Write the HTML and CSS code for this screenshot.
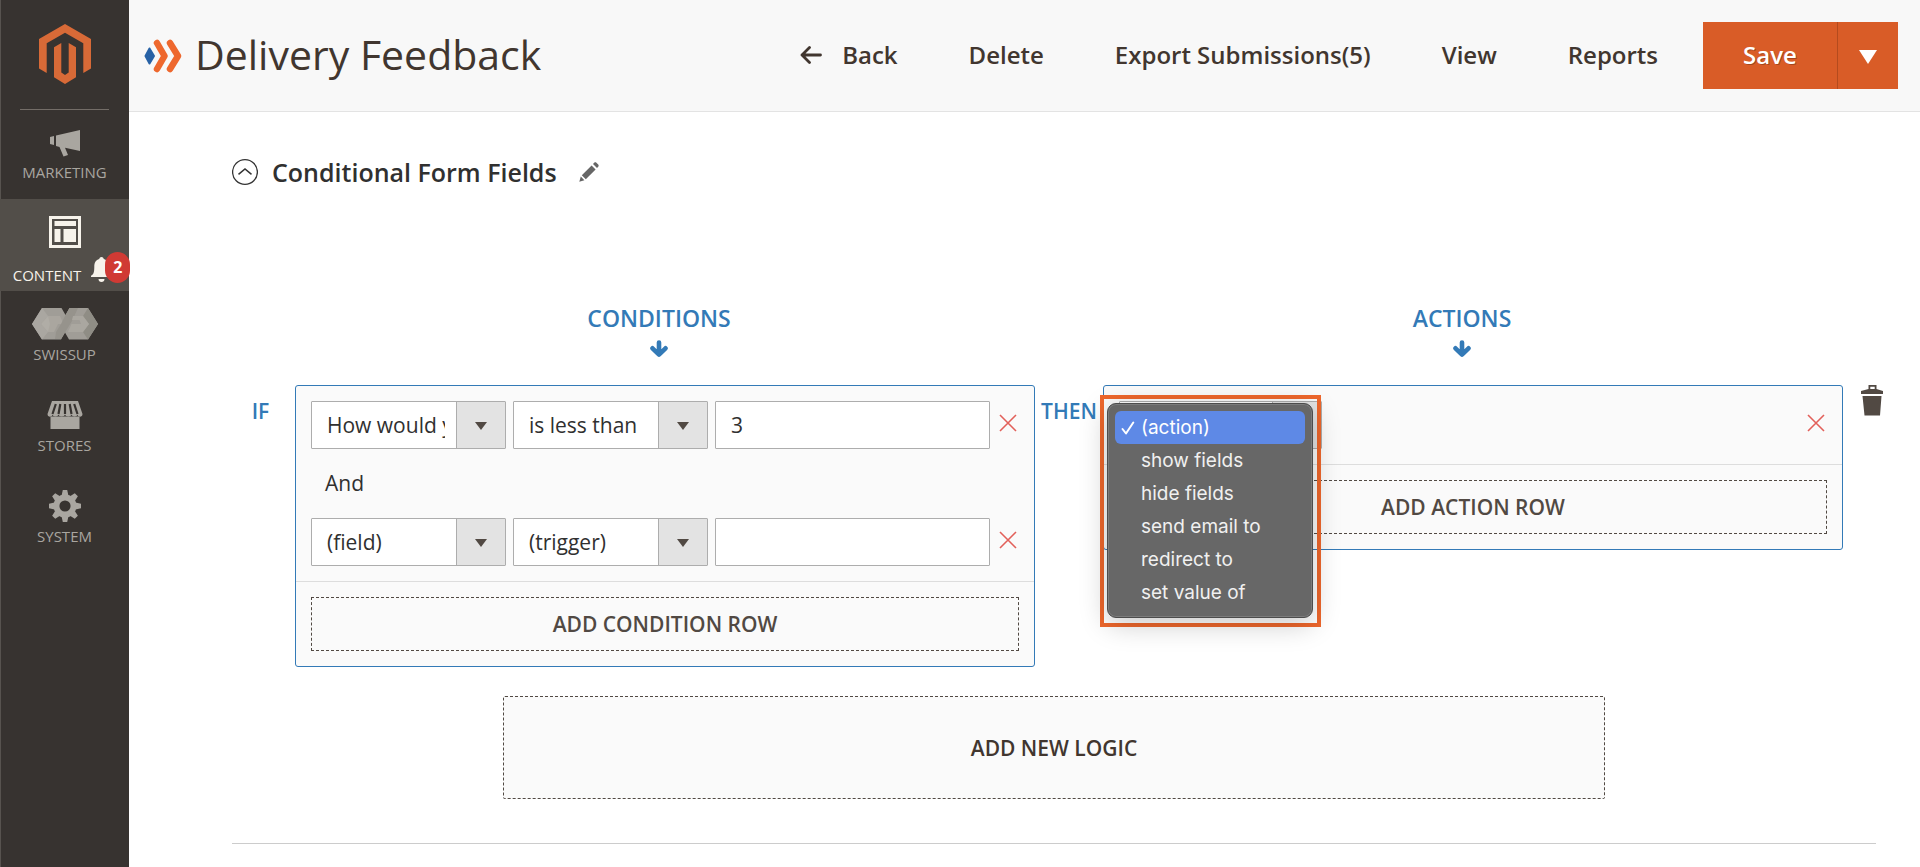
FILE: index.html
```html
<!DOCTYPE html>
<html lang="en">
<head>
<meta charset="utf-8">
<title>Delivery Feedback</title>
<meta name="viewport" content="width=device-width, initial-scale=1">
<link rel="stylesheet" href="styles.css">
</head>
<body>
<svg class="defs" aria-hidden="true">
  <symbol id="arrow-down" viewBox="0 0 18 18"><path d="M9 2.500v12M2.500 8.300L9 14.600l6.500-6.300" fill="none" stroke="currentColor" stroke-width="4.600" stroke-linecap="round" stroke-linejoin="round"/></symbol>
  <symbol id="cross" viewBox="0 0 18 18"><path d="M1 1l16 16M17 1L1 17" fill="none" stroke="currentColor" stroke-width="1.600"/></symbol>
</svg>
<div class="app">
  <aside class="sidebar">
    <a class="brand" href="#" aria-label="Dashboard">
      <svg width="52" height="60" viewBox="0 0 52 60"><path d="M26 0l26 15v29.500L44.300 49V19.300L26 8.700 7.700 19.300V49L0 44.500V15zM15 23.300L22.300 19v29.600L26 51l3.700-2.400V19l7.300 4.300v30L26 60l-11-6.700z" fill="#d86a37"/></svg>
    </a>
    <nav class="menu">
      <a class="menu-item" href="#">
        <svg width="32" height="34" viewBox="0 0 32 34"><path d="M1 12l4-1v9l-4-1zM7 10.500L31 5v21l-15-3.300 3 7.300-4.500 1.400L10.500 22 7 21z" fill="currentColor"/></svg>
        <span>MARKETING</span>
      </a>
      <a class="menu-item active" href="#">
        <svg width="32" height="34" viewBox="0 0 32 34"><path d="M0 1h32v32H0zM3 4v26h26V4z" fill="currentColor" fill-rule="evenodd"/><path d="M5.500 6h21.500v5H5.500zM5.500 14h6v13h-6zM14.500 14H27v13H14.500z" fill="currentColor"/></svg>
        <span class="menu-notice">CONTENT
          <span class="bell"><svg width="21" height="25" viewBox="0 0 21 25"><path d="M10.500 0c1.500 0 2.200 1 2.200 2 4 1.200 5 4 5 8 0 6 1 7.500 3.300 8.800V20H0v-1.200C2.300 17.500 3.300 16 3.300 10c0-4 1-6.800 5-8 0-1 .7-2 2.200-2zM7.500 22h6c0 1.700-1.200 3-3 3s-3-1.300-3-3z" fill="currentColor"/></svg><b class="badge">2</b></span>
        </span>
      </a>
      <a class="menu-item" href="#">
        <svg width="66" height="34" viewBox="0 0 66 34">
          <path d="M10 1h19.500l4 7 4-7H56l10 16-10 15.500H37l-4-7-4 7H10L0 17z" fill="#a09d97"/>
          <path d="M10 1L0 17l10 15.500 6-7.500L9 17l7-8z" fill="#aaa7a1"/>
          <path d="M16 9h12l3.500 8H18l-4-3zM14 20l4-3h8l-4 8h-6z" fill="#aaa69f"/>
          <path d="M9 17l7-8 2 8-2 8z" fill="#b0ada6"/>
          <path d="M37.500 1l-4 7L29 17l-5 8-1 7h6l4-6.500 7-11.500L46 1z" fill="#96938c"/>
          <path d="M56 1l10 16-10 15.500-5-7.500 6-8-6-8z" fill="#8f8d85"/>
          <path d="M41 9h10l6 8-6 8H36l3.500-8H49l-1.500-4H40z" fill="#aaa7a0"/>
        </svg>
        <span>SWISSUP</span>
      </a>
      <a class="menu-item" href="#">
        <svg width="36" height="34" viewBox="0 0 36 34"><path d="M5 3h26l4.500 13c0 3.500-4.500 3.500-5 .5-.3 2.500-5.500 2.500-6 0-.3 2.500-6 2.500-6.500 0-.5 2.500-6.200 2.500-6.500 0-.5 2.500-5.700 2.500-6 0-.5 3-5 3-5-.5z" fill="currentColor"/><path d="M8.800 6L5.500 16M13.300 6l-1.800 10M18 6v10M22.700 6l1.800 10M27.200 6l3.300 10" stroke="#373330" stroke-width="2.200" fill="none"/><path d="M3.500 18.500h29V31h-29z" fill="currentColor"/></svg>
        <span>STORES</span>
      </a>
      <a class="menu-item" href="#">
        <svg width="34" height="34" viewBox="0 0 34 34"><g fill="currentColor"><path d="M17 5.500a11.500 11.500 0 1 0 0 23 11.500 11.500 0 0 0 0-23zm0 5.900a5.600 5.600 0 1 1 0 11.200 5.600 5.600 0 0 1 0-11.200z"/><g id="teeth"><path d="M14.800 1h4.400l1.200 5.500h-6.800z"/><path d="M13.600 27.500h6.800L19.200 33h-4.400zM1 14.800v4.400l5.500 1.200v-6.800zM33 14.800v4.400l-5.500 1.200v-6.800z"/></g><use href="#teeth" transform="rotate(45 17 17)"/></g></svg>
        <span>SYSTEM</span>
      </a>
    </nav>
  </aside>

  <div class="page">
    <header class="topbar">
      <svg class="title-icon" width="38" height="34" viewBox="0 0 38 34"><path d="M5.500 9.500L10 17l-4.500 7.500L1.500 17z" fill="#2862a6" stroke="#2862a6" stroke-width="2" stroke-linejoin="round"/><path d="M13 4l7.500 13L13 30M26 4l8 13-8 13" fill="none" stroke="#ee682e" stroke-width="6.500" stroke-linecap="round" stroke-linejoin="round"/></svg>
      <h1>Delivery Feedback</h1>
      <div class="actions">
        <button class="action back" type="button"><svg width="22" height="18" viewBox="0 0 22 18"><path d="M20.500 9H2M9.500 1.500L2 9l7.500 7.500" fill="none" stroke="currentColor" stroke-width="2.800" stroke-linecap="round" stroke-linejoin="round"/></svg>Back</button>
        <button class="action" type="button">Delete</button>
        <button class="action" type="button">Export Submissions(5)</button>
        <button class="action" type="button">View</button>
        <button class="action" type="button">Reports</button>
      </div>
      <div class="save-group">
        <button class="save" type="button">Save</button>
        <button class="save-toggle" type="button" aria-label="More save options"><svg width="18" height="14" viewBox="0 0 18 14"><path d="M0 0h18L9 14z" fill="#fff"/></svg></button>
      </div>
    </header>

    <main class="content">
      <section class="fieldset">
        <div class="fieldset-title">
          <button class="icon-button" type="button" aria-label="Collapse section"><svg width="26" height="28" viewBox="1 0 26 28"><circle cx="14" cy="14" r="12.400" fill="none" stroke="#333" stroke-width="1.300"/><path d="M7.500 16.300L14 11l6.500 5.300" fill="none" stroke="#333" stroke-width="1.500"/></svg></button>
          <h2>Conditional Form Fields</h2>
          <button class="icon-button" type="button" aria-label="Edit title"><svg width="20" height="20" viewBox="0 0 20 20"><path d="M12.600 3.400l4 4L6.800 17.200l-4-4zM14 2l1.200-1.300c.6-.6 1.600-.6 2.200 0l1.800 1.800c.6.6.6 1.600 0 2.200L18 6zM1.800 14.600l3.600 3.600L.3 19.700z" fill="#666"/></svg></button>
        </div>

        <div class="logic">
          <div class="column-head conditions-head"><h3>CONDITIONS</h3><svg width="18" height="18"><use href="#arrow-down"/></svg></div>
          <div class="column-head actions-head"><h3>ACTIONS</h3><svg width="18" height="18"><use href="#arrow-down"/></svg></div>

          <span class="keyword keyword-if">IF</span>
          <div class="panel">
            <div class="rows">
              <div class="row">
                <span class="select"><select aria-label="Field"><option>How would you rate the delivery?</option></select></span>
                <span class="select"><select aria-label="Trigger"><option>is less than</option></select></span>
                <input class="value" type="text" value="3" aria-label="Value">
                <button class="remove" type="button" aria-label="Remove condition"><svg width="18" height="18"><use href="#cross"/></svg></button>
              </div>
              <div class="joiner">And</div>
              <div class="row">
                <span class="select"><select aria-label="Field"><option>(field)</option></select></span>
                <span class="select"><select aria-label="Trigger"><option>(trigger)</option></select></span>
                <input class="value" type="text" aria-label="Value">
                <button class="remove" type="button" aria-label="Remove condition"><svg width="18" height="18"><use href="#cross"/></svg></button>
              </div>
            </div>
            <div class="panel-foot"><button class="add" type="button">ADD CONDITION ROW</button></div>
          </div>

          <span class="keyword">THEN</span>
          <div class="panel">
            <div class="rows">
              <div class="row action-row">
                <div class="action-picker">
                  <span class="select"><select aria-label="Action"><option>(action)</option></select></span>
                  <div class="popup">
                    <ul class="options" role="listbox" aria-label="Action">
                      <li class="selected" role="option" aria-selected="true"><svg width="14" height="14" viewBox="0 0 14 14"><path d="M1.500 8l3.500 4.500L12.300 1.500" fill="none" stroke="#fff" stroke-width="2" stroke-linecap="round" stroke-linejoin="round"/></svg>(action)</li>
                      <li role="option">show fields</li>
                      <li role="option">hide fields</li>
                      <li role="option">send email to</li>
                      <li role="option">redirect to</li>
                      <li role="option">set value of</li>
                    </ul>
                  </div>
                </div>
                <button class="remove" type="button" aria-label="Remove action"><svg width="18" height="18"><use href="#cross"/></svg></button>
              </div>
            </div>
            <div class="panel-foot"><button class="add" type="button">ADD ACTION ROW</button></div>
          </div>
          <button class="trash" type="button" aria-label="Delete logic"><svg width="22" height="31" viewBox="0 0 22 31"><path d="M7.500 4V0h8v4l6.500 2v3H0V6zM9.300 1.800V4h4.400V1.800zM1.500 11h19L19 30.500H3.500z" fill="#514943" fill-rule="evenodd"/></svg></button>
        </div>

        <button class="add-logic" type="button">ADD NEW LOGIC</button>
      </section>
    </main>
  </div>
</div>
</body>
</html>
```

FILE: styles.css
```css
* { box-sizing: border-box; }

body {
  margin: 0;
  background: #fff;
  color: #303030;
  font: 21px/28px "Open Sans", "Noto Sans", sans-serif;
}

button, input, select { font: inherit; color: inherit; }
button { padding: 0; border: 0; background: none; cursor: pointer; }
h1, h2, h3, ul { margin: 0; padding: 0; }
svg { display: block; flex: none; }
.defs { position: absolute; width: 0; height: 0; }

.app { display: flex; min-height: 100vh; }

/* Sidebar */
.sidebar {
  position: relative;
  z-index: 2;
  flex: none;
  width: 129px;
  background: #373330;
  box-shadow: inset 1px 0 0 #57534f;
}
.brand {
  display: flex;
  justify-content: center;
  height: 110px;
  margin: 0 20px;
  padding-top: 24px;
  border-bottom: 1px solid #736d67;
}
.menu { display: flex; flex-direction: column; }
.menu-item {
  display: flex;
  flex-direction: column;
  align-items: center;
  gap: 2px;
  height: 91px;
  padding-top: 16px;
  color: #a9a6a0;
  font-size: 15px;
  line-height: 22px;
  text-decoration: none;
}
.menu-item:first-child { height: 89px; padding-top: 15px; }
.menu-item.active { height: 92px; background: #524e49; color: #f7f3eb; }
.menu-notice { display: flex; align-items: flex-end; gap: 10px; padding-top: 6px; margin-right: 4px; }
.bell { position: relative; margin-bottom: 4px; }
.badge {
  position: absolute;
  left: 14px;
  top: -5px;
  width: 25px;
  border-radius: 13px;
  background: #d03a34;
  color: #fff;
  font-size: 16px;
  line-height: 31px;
  text-align: center;
}

/* Header */
.page { flex: 1; min-width: 0; }
.topbar {
  display: flex;
  align-items: center;
  height: 112px;
  padding: 0 22px 0 15px;
  background: #f8f8f8;
  border-bottom: 1px solid #e3e3e3;
  color: #41362f;
}
.topbar h1 { margin-left: 13px; padding-bottom: 4px; font-size: 41px; line-height: 56px; font-weight: 400; }
.actions { display: flex; gap: 71px; margin-left: auto; padding-bottom: 2px; }
.action { display: flex; align-items: center; gap: 20px; font-size: 24px; line-height: 32px; font-weight: 600; }
.save-group { display: flex; margin-left: 45px; color: #fff; }
.save, .save-toggle { height: 67px; background: #d95c27; }
.save { width: 134px; padding-bottom: 2px; font-size: 24px; font-weight: 600; text-shadow: 1px 1px 0 rgba(0, 0, 0, .25); }
.save-toggle { display: flex; align-items: center; justify-content: center; width: 61px; padding-top: 2px; border-left: 1px solid #b44b1e; }

/* Section */
.content { padding: 42px 44px 0 103px; }
.fieldset { border-bottom: 1px solid #ccc; padding-bottom: 44px; }
.fieldset-title { display: flex; align-items: center; height: 36px; }
.fieldset-title h2 { margin: 0 22px 0 14px; font-size: 25px; line-height: 32px; font-weight: 600; }

.logic {
  display: grid;
  grid-template-columns: 63px 1fr 68px 1fr 40px;
  align-items: start;
  margin: 112px -7px 0 0;
}
.column-head { display: flex; flex-direction: column; align-items: center; gap: 6px; padding-bottom: 27px; color: #337ab7; }
.column-head h3 { font-size: 23px; line-height: 32px; font-weight: 600; }
.conditions-head { grid-column: 2; padding-right: 12px; }
.actions-head { grid-column: 4; padding-right: 22px; }
.keyword { padding-top: 12px; color: #337ab7; font-weight: 600; text-align: center; }
.keyword-if { grid-column: 1; padding-right: 6px; }

.panel { min-width: 0; border: 1px solid #337ab7; border-radius: 3px; background: #fafafa; }
.rows { padding: 15px; }
.row { display: flex; align-items: center; gap: 7px; }
.select { position: relative; flex: none; width: 195px; }
.select::after {
  content: "";
  position: absolute;
  right: 19px;
  top: 21px;
  border: 6px solid transparent;
  border-top: 8px solid #514943;
  border-bottom: 0;
  pointer-events: none;
}
.select select {
  display: block;
  appearance: none;
  width: 100%;
  height: 48px;
  padding: 0 60px 0 15px;
  border: 1px solid #adadad;
  border-radius: 1px;
  background: linear-gradient(90deg, #adadad 1px, #e3e3e3 1px) right / 49px 100% no-repeat #fff;
}
.value {
  flex: 1;
  min-width: 0;
  height: 48px;
  padding: 0 15px;
  border: 1px solid #adadad;
  border-radius: 1px;
  background: #fff;
}
.remove { margin: 0 2px 5px; color: #e2605a; }
.joiner { padding: 20px 14px 21px; }
.panel-foot { padding: 15px; border-top: 1px solid #ddd; }
.add {
  display: block;
  width: 100%;
  height: 54px;
  border: 1px dashed #514943;
  color: #514943;
  font-weight: 600;
}
.trash { justify-self: end; }
.add-logic {
  display: block;
  width: 67%;
  height: 103px;
  margin: 29px auto 0;
  border: 1px dashed #514943;
  border-radius: 2px;
  background: #fafafa;
  color: #41362f;
  font-weight: 600;
}

/* Open action list */
.action-row { justify-content: space-between; }
.action-picker { position: relative; }
.action-picker .select { display: block; width: 203px; }
.popup {
  position: absolute;
  z-index: 1;
  top: -6px;
  left: -19px;
  width: 221px;
  padding: 4px 3px 5px;
  border: 4px solid #ee672c;
}
.options {
  width: 206px;
  padding: 7px 7px 8px;
  border: 1px solid #4c4c4c;
  border-radius: 9px;
  background: #676767;
  box-shadow: inset 0 0 0 1px #7c7c7c, 0 6px 28px rgba(0, 0, 0, .22);
  color: #f0f0f0;
  font: 19px/33px Inter, "Liberation Sans", sans-serif;
  list-style: none;
}
.options li { display: flex; align-items: center; padding-left: 26px; }
.options .selected { gap: 6px; padding-left: 6px; border-radius: 6px; background: #5e89e6; color: #fff; }
```
